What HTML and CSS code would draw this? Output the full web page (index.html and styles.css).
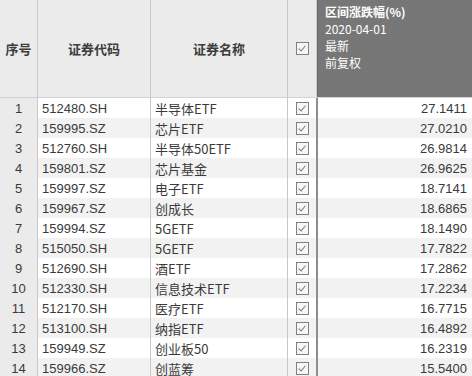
FILE: index.html
```html
<!DOCTYPE html>
<html lang="zh">
<head>
<meta charset="utf-8">
<link rel="stylesheet" href="styles.css">
</head>
<body>
<div class="table">
  <div class="row head">
    <div class="cell c1 center bold">序号</div>
    <div class="cell c2 center bold">证券代码</div>
    <div class="cell c3 center bold">证券名称</div>
    <div class="cell c4 center"><span class="cb"></span></div>
    <div class="cell c5 dark">
      <div class="title">区间涨跌幅(%)</div>
      <div>2020-04-01</div>
      <div>最新</div>
      <div>前复权</div>
    </div>
  </div>
  <div class="row"><div class="cell c1 center num">1</div><div class="cell c2 num">512480.SH</div><div class="cell c3 name">半导体ETF</div><div class="cell c4 center"><span class="cb"></span></div><div class="cell c5 right num">27.1411</div></div>
  <div class="row alt"><div class="cell c1 center num">2</div><div class="cell c2 num">159995.SZ</div><div class="cell c3 name">芯片ETF</div><div class="cell c4 center"><span class="cb"></span></div><div class="cell c5 right num">27.0210</div></div>
  <div class="row"><div class="cell c1 center num">3</div><div class="cell c2 num">512760.SH</div><div class="cell c3 name">半导体50ETF</div><div class="cell c4 center"><span class="cb"></span></div><div class="cell c5 right num">26.9814</div></div>
  <div class="row alt"><div class="cell c1 center num">4</div><div class="cell c2 num">159801.SZ</div><div class="cell c3 name">芯片基金</div><div class="cell c4 center"><span class="cb"></span></div><div class="cell c5 right num">26.9625</div></div>
  <div class="row"><div class="cell c1 center num">5</div><div class="cell c2 num">159997.SZ</div><div class="cell c3 name">电子ETF</div><div class="cell c4 center"><span class="cb"></span></div><div class="cell c5 right num">18.7141</div></div>
  <div class="row alt"><div class="cell c1 center num">6</div><div class="cell c2 num">159967.SZ</div><div class="cell c3 name">创成长</div><div class="cell c4 center"><span class="cb"></span></div><div class="cell c5 right num">18.6865</div></div>
  <div class="row"><div class="cell c1 center num">7</div><div class="cell c2 num">159994.SZ</div><div class="cell c3 name">5GETF</div><div class="cell c4 center"><span class="cb"></span></div><div class="cell c5 right num">18.1490</div></div>
  <div class="row alt"><div class="cell c1 center num">8</div><div class="cell c2 num">515050.SH</div><div class="cell c3 name">5GETF</div><div class="cell c4 center"><span class="cb"></span></div><div class="cell c5 right num">17.7822</div></div>
  <div class="row"><div class="cell c1 center num">9</div><div class="cell c2 num">512690.SH</div><div class="cell c3 name">酒ETF</div><div class="cell c4 center"><span class="cb"></span></div><div class="cell c5 right num">17.2862</div></div>
  <div class="row alt"><div class="cell c1 center num">10</div><div class="cell c2 num">512330.SH</div><div class="cell c3 name">信息技术ETF</div><div class="cell c4 center"><span class="cb"></span></div><div class="cell c5 right num">17.2234</div></div>
  <div class="row"><div class="cell c1 center num">11</div><div class="cell c2 num">512170.SH</div><div class="cell c3 name">医疗ETF</div><div class="cell c4 center"><span class="cb"></span></div><div class="cell c5 right num">16.7715</div></div>
  <div class="row alt"><div class="cell c1 center num">12</div><div class="cell c2 num">513100.SH</div><div class="cell c3 name">纳指ETF</div><div class="cell c4 center"><span class="cb"></span></div><div class="cell c5 right num">16.4892</div></div>
  <div class="row"><div class="cell c1 center num">13</div><div class="cell c2 num">159949.SZ</div><div class="cell c3 name">创业板50</div><div class="cell c4 center"><span class="cb"></span></div><div class="cell c5 right num">16.2319</div></div>
  <div class="row alt"><div class="cell c1 center num">14</div><div class="cell c2 num">159966.SZ</div><div class="cell c3 name">创蓝筹</div><div class="cell c4 center"><span class="cb"></span></div><div class="cell c5 right num">15.5400</div></div>
</div>
</body>
</html>
```
FILE: styles.css
```css
html, body {
  margin: 0;
  padding: 0;
  background: #ffffff;
  overflow: hidden;
}
.table {
  width: 472px;
  font-family: "Noto Sans CJK SC", sans-serif;
  font-size: 13px;
  color: #3a3a3a;
}
.row {
  display: flex;
  height: 20px;
  background: #ffffff;
}
.row.alt {
  background: #f2f2f2;
}
.row.head {
  height: 97px;
  background: #ebebeb;
  border-bottom: 1px solid #d2d2d2;
}
.cell {
  box-sizing: border-box;
  display: flex;
  align-items: center;
  white-space: nowrap;
  overflow: hidden;
}
.c1 {
  width: 38px;
  background: #ebebeb;
  border-right: 1px solid #c8c8c8;
}
.c2 {
  width: 113px;
  padding-left: 4px;
  border-right: 1px solid #c8c8c8;
}
.c3 {
  width: 137px;
  padding-left: 4px;
  border-right: 1px solid #c8c8c8;
}
.c4 {
  width: 28px;
}
.c5 {
  width: 156px;
  border-left: 2px solid #8e8e8e;
  padding-right: 5px;
}
.head .c4 {
  border-right: 1px solid #cfcfcf;
  width: 29px;
}
.head .c5 {
  width: 155px;
  border-left: 1px solid #6a6a6a;
}
.center {
  justify-content: center;
  padding-left: 0;
}
.right {
  justify-content: flex-end;
}
.bold {
  font-weight: bold;
  color: #3c3c3c;
}
.num {
  font-family: "Liberation Sans", Arial, sans-serif;
  font-size: 13px;
}
.name {
  font-size: 13px;
}
.dark {
  background: #777777;
  color: #ffffff;
  flex-direction: column;
  align-items: flex-start;
  justify-content: flex-start;
  padding: 3px 0 0 7px;
  font-size: 12px;
  line-height: 17px;
}
.dark > div {
  height: 17px;
}
.dark .title {
  font-weight: bold;
}
.cb {
  display: block;
  width: 13px;
  height: 13px;
  box-sizing: border-box;
  border: 1px solid #808080;
  background: #f6f6f6;
  position: relative;
}
.cb::after {
  content: "";
  position: absolute;
  left: 3.5px;
  top: 1px;
  width: 3px;
  height: 6px;
  border-right: 1px solid #7a7a7a;
  border-bottom: 1px solid #7a7a7a;
  transform: rotate(40deg);
}
```
